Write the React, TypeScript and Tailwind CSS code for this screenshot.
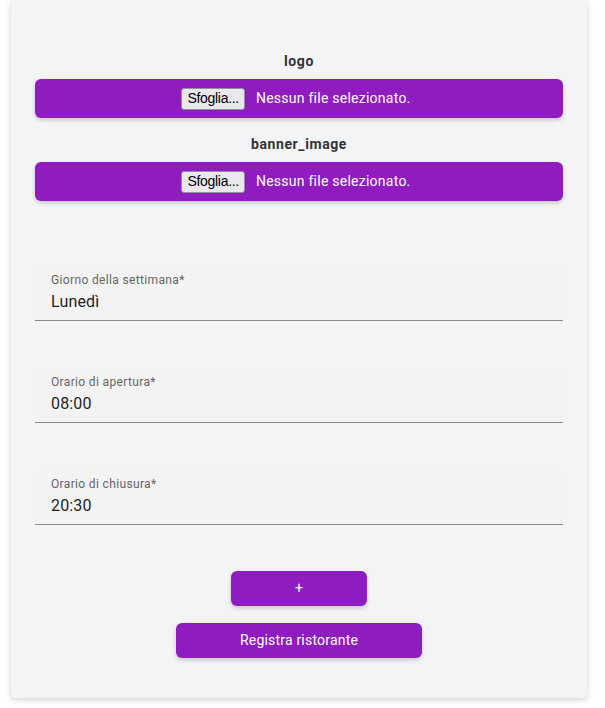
import React from "react";

function FileBar() {
  return (
    <div className="h-[39px] w-full rounded-[6px] bg-[#8e1cbf] shadow-[0_2px_4px_rgba(0,0,0,0.2)] flex items-center justify-center pr-[6px]">
      <span className="h-[22px] px-[5px] flex items-center rounded-[3px] border border-[#8f8f9d] bg-[#e9e9ed] text-[14px] text-black font-['Liberation_Sans',Arial,sans-serif] tracking-[-0.3px]">
        Sfoglia...
      </span>
      <span className="ml-[11px] text-[14px] tracking-[0.25px] text-white font-['Roboto',sans-serif]">
        Nessun file selezionato.
      </span>
    </div>
  );
}

function Field({ label, value }: { label: string; value: string }) {
  return (
    <div className="h-[56px] w-full rounded-t-[4px] bg-[#f3f3f3] border-b border-[#8a8a8a] px-[16px] flex flex-col font-['Roboto',sans-serif]">
      <div className="pt-[7px] text-[12px] leading-[17px] tracking-[0.35px] text-[#666]">{label}</div>
      <div className="mt-[1px] text-[16px] leading-[23px] tracking-[0.15px] text-[#1f1f1f]">{value}</div>
    </div>
  );
}

export default function App() {
  return (
    <div className="min-h-[708px] bg-white font-['Roboto',sans-serif]">
      <div className="ml-[11px] w-[576px] bg-[#f3f4f6] shadow-[0_2px_6px_rgba(0,0,0,0.18)] rounded-b-[4px] px-[24px] pt-[51px] pb-[40px] flex flex-col items-center">
        <div className="text-[14px] leading-[20px] font-bold tracking-[0.6px] text-[#333]">logo</div>
        <div className="mt-[8px] w-full">
          <FileBar />
        </div>
        <div className="mt-[16px] text-[14px] leading-[20px] font-bold tracking-[0.6px] text-[#333]">banner_image</div>
        <div className="mt-[8px] w-full">
          <FileBar />
        </div>
        <div className="mt-[64px] w-full">
          <Field label="Giorno della settimana*" value="Lunedì" />
        </div>
        <div className="mt-[46px] w-full">
          <Field label="Orario di apertura*" value="08:00" />
        </div>
        <div className="mt-[46px] w-full">
          <Field label="Orario di chiusura*" value="20:30" />
        </div>
        <button className="mt-[46px] h-[35px] w-[136px] rounded-[6px] bg-[#8e1cbf] text-white text-[14px] tracking-[0.2px] shadow-[0_2px_4px_rgba(0,0,0,0.2)]">
          +
        </button>
        <button className="mt-[17px] h-[35px] w-[246px] rounded-[6px] bg-[#8e1cbf] text-white text-[14px] tracking-[0.2px] shadow-[0_2px_4px_rgba(0,0,0,0.2)]">
          Registra ristorante
        </button>
      </div>
    </div>
  );
}
